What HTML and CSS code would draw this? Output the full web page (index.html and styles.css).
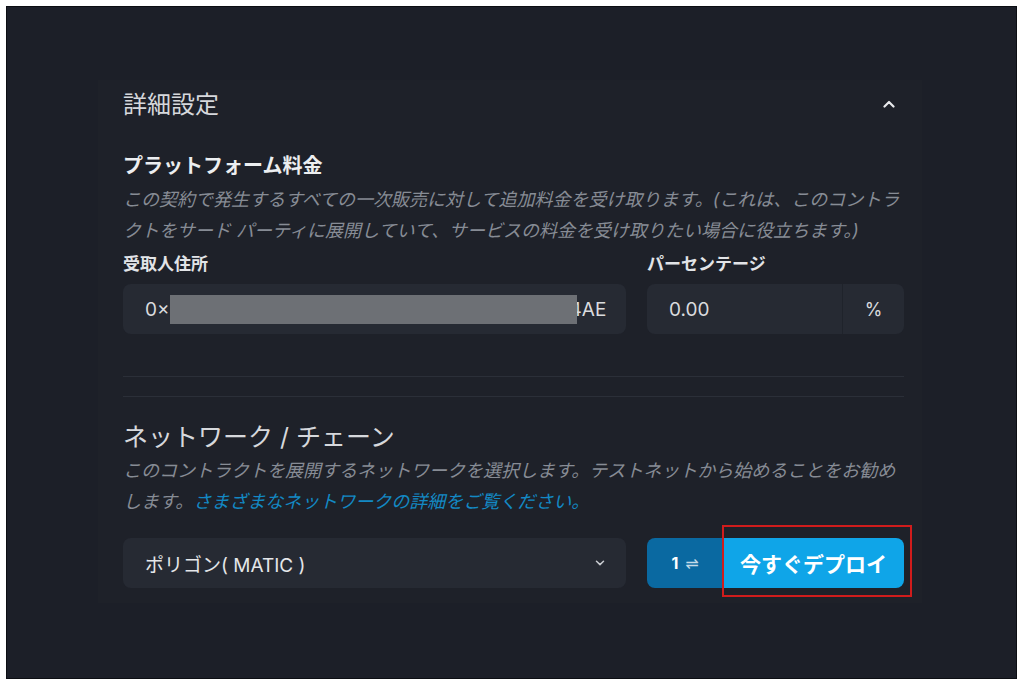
FILE: index.html
```html
<!DOCTYPE html>
<html lang="ja">
<head>
  <meta charset="UTF-8">
  <meta name="viewport" content="width=device-width, initial-scale=1">
  <title>詳細設定</title>
  <link rel="stylesheet" href="styles.css">
</head>
<body>
  <div class="frame">
    <div class="panel">
      <div class="panel-head">
        <div class="panel-title">詳細設定</div>
        <svg class="chevron-up" width="12" height="8" viewBox="0 0 12 8">
          <polyline points="1.5,6.5 6,2 10.5,6.5" fill="none" stroke="#e8e9eb" stroke-width="2.2" stroke-linecap="round" stroke-linejoin="round"/>
        </svg>
      </div>

      <div class="section-title">プラットフォーム料金</div>
      <p class="desc">この契約で発生するすべての一次販売に対して追加料金を受け取ります。(これは、このコントラ<br>クトをサード パーティに展開していて、サービスの料金を受け取りたい場合に役立ちます。)</p>

      <div class="field-row">
        <div class="field">
          <label class="field-label">受取人住所</label>
          <div class="input">
            <span>0×</span>
            <span class="mask"></span>
            <span class="addr-tail">4AE</span>
          </div>
        </div>
        <div class="field">
          <label class="field-label">パーセンテージ</label>
          <div class="input input-group">
            <span class="input-value">0.00</span>
            <span class="addon">%</span>
          </div>
        </div>
      </div>

      <hr class="divider">
      <hr class="divider divider-second">

      <div class="network-title">ネットワーク / チェーン</div>
      <p class="desc">このコントラクトを展開するネットワークを選択します。テストネットから始めることをお勧めします。<a href="#" class="link">さまざまなネットワークの詳細をご覧ください。</a></p>

      <div class="field-row deploy-row">
        <div class="select">
          <span>ポリゴン( MATIC )</span>
          <svg width="10" height="6" viewBox="0 0 10 6">
            <polyline points="1.5,1.2 5,4.6 8.5,1.2" fill="none" stroke="#c9ccd1" stroke-width="1.5" stroke-linecap="round" stroke-linejoin="round"/>
          </svg>
        </div>
        <div class="btn-group">
          <button class="btn-count">1 <span class="swap">⇌</span></button>
          <button class="btn-deploy">今すぐデプロイ</button>
          <div class="highlight"></div>
        </div>
      </div>
    </div>
  </div>
</body>
</html>
```

FILE: styles.css
```css
/* Estilos básicos */
body {
  margin: 0;
  background-color: #fff;
  font-family: 'Inter', 'Noto Sans CJK JP', sans-serif;
}
.frame {
  margin: 6px 0 0 6px;
  width: 1009px;
  height: 671px;
  background-color: #1c1f28;
  border: 1px solid #0c0e13;
  overflow: hidden;
}
.panel {
  margin: 73px 0 0 91px;
  width: 781px;
  padding: 0 18px 15px 25px;
  background-color: #1e2129;
}
.panel-head {
  height: 50px;
  display: flex;
  justify-content: space-between;
  align-items: center;
  padding-right: 9px;
}
.panel-title {
  font-size: 24px;
  line-height: 1;
  color: #d6d8dc;
}
.chevron-up {
  margin-top: -2px;
}
.section-title {
  margin-top: 22px;
  font-size: 20px;
  line-height: 28px;
  font-weight: bold;
  color: #eceef0;
}
.desc {
  margin: 4px 0 0;
  font-size: 18px;
  line-height: 31px;
  font-style: italic;
  color: #878c95;
  width: 778px;
}
.link {
  color: #1389c4;
  text-decoration: none;
}
.field-row {
  display: grid;
  grid-template-columns: 503px 1fr;
  gap: 21px;
  margin-top: 6px;
}
.field-label {
  display: block;
  font-size: 17px;
  line-height: 24px;
  font-weight: bold;
  color: #e2e4e7;
  margin-bottom: 8px;
}
.input {
  height: 50px;
  box-sizing: border-box;
  border-radius: 8px;
  background-color: #262a33;
  display: flex;
  align-items: center;
  padding-left: 22px;
  font-size: 19px;
  color: #d9dbde;
}
.mask {
  position: relative;
  z-index: 1;
  width: 407px;
  height: 29px;
  background-color: #6d7075;
  flex: none;
}
.addr-tail {
  margin-left: -7px;
}
.input-group {
  padding-left: 0;
}
.input-value {
  flex: 1;
  padding-left: 22px;
}
.addon {
  width: 61px;
  height: 100%;
  display: flex;
  align-items: center;
  justify-content: center;
  border-left: 1px solid #1f232b;
  font-size: 18px;
}
.divider {
  margin: 42px 0 0;
  border: none;
  border-top: 1px solid #2b2f38;
}
.divider-second {
  margin-top: 19px;
}
.network-title {
  margin-top: 24px;
  font-size: 25px;
  line-height: 32px;
  color: #d6d8dc;
}
.network-title + .desc {
  margin-top: 2px;
}
.deploy-row {
  margin-top: 21px;
}
.select {
  height: 50px;
  box-sizing: border-box;
  border-radius: 8px;
  background-color: #262a33;
  display: flex;
  align-items: center;
  justify-content: space-between;
  padding: 0 21px 0 22px;
  font-size: 19px;
  color: #e4e6e9;
}
.btn-group {
  position: relative;
  display: flex;
  height: 50px;
}
.btn-group button {
  border: none;
  font-family: inherit;
  color: #fff;
  font-weight: bold;
  cursor: pointer;
}
.btn-count {
  width: 76px;
  background-color: #0a69a1;
  border-radius: 8px 0 0 8px;
  font-size: 16px;
}
.swap {
  font-family: 'DejaVu Sans', sans-serif;
  font-weight: normal;
  color: #c6dbe8;
  margin-left: 3px;
}
.btn-deploy {
  flex: 1;
  background-color: #0fa5e8;
  border-radius: 0 8px 8px 0;
  font-size: 21px;
}
/* Marco rojo de resaltado sobre el botón */
.highlight {
  position: absolute;
  left: 75px;
  top: -13px;
  width: 186px;
  height: 68px;
  border: 2px solid #d11c1c;
  pointer-events: none;
}
```
